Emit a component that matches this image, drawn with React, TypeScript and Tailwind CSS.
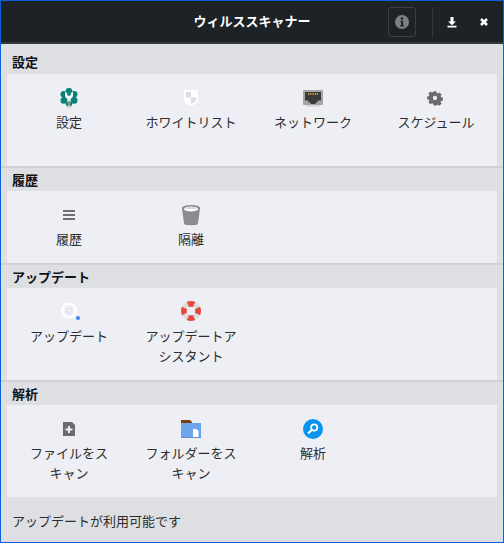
import React from "react";

const Wrench = () => (
  <svg width="24" height="24" viewBox="0 0 24 24">
    <g fill="#0b8277">
      <circle cx="12" cy="12.500" r="6.500" />
      <circle cx="12" cy="6.300" r="3.300" />
      <circle cx="17.200" cy="9.300" r="3.300" />
      <circle cx="17.200" cy="15.500" r="3.300" />
      <circle cx="12" cy="18.500" r="3.300" />
      <circle cx="6.800" cy="15.500" r="3.300" />
      <circle cx="6.800" cy="9.300" r="3.300" />
    </g>
    <path fill="#f4f5f8" d="M8 6.800v3.400c0 1.700 1 3 2.400 3.500v3.800h3.200v-3.800c1.400-.5 2.400-1.800 2.400-3.500V6.800l-2.200 1.300v1.900L12 11l-1.800-1V8.100z" />
    <rect x="10.800" y="16" width="2.400" height="4.500" fill="#8e8e8e" />
    <ellipse cx="12" cy="21.700" rx="3.200" ry="1.300" fill="#d6d6d8" />
  </svg>
);

const Shield = () => (
  <svg width="24" height="24" viewBox="0 0 24 24">
    <path fill="#ffffff" d="M5 5h14v9.500c0 3-3.500 5.100-7 6.500-3.500-1.400-7-3.500-7-6.500z" />
    <rect x="7" y="7" width="5" height="5.500" fill="#dcdde2" />
    <path fill="#dcdde2" d="M12 12.500h5v2c0 1.900-2.500 3.300-5 4.400z" />
  </svg>
);

const Network = () => (
  <svg width="24" height="24" viewBox="0 0 24 24">
    <rect x="2" y="5" width="20" height="15" rx="1" fill="#a5a5a8" />
    <path fill="#d9d9dc" d="M4 20h16l-2.500 2h-11z" />
    <path fill="#3a3a3c" d="M4 7h16v8.500h-3.500v2h-2v1.500h-5v-1.500h-2v-2H4z" />
    <path stroke="#eebb44" strokeWidth="1.500" strokeDasharray="1 .8" d="M7 9h10" fill="none" />
  </svg>
);

const Gear = () => (
  <svg width="24" height="24" viewBox="0 0 24 24">
    <g transform="translate(11 13) scale(.72) translate(-12 -12)">
      <path fill="#6b6b6d" fillRule="evenodd" d="M10 3h4l.5 2.500 1.700.7 2.100-1.400 2.900 2.900-1.400 2.100.7 1.700 2.500.5v4l-2.500.5-.7 1.700 1.400 2.100-2.900 2.900-2.100-1.400-1.700.7L14 23h-4l-.5-2.500-1.700-.7-2.100 1.400-2.900-2.900 1.400-2.100-.7-1.700L1 14.500v-4l2.500-.5.7-1.700-1.400-2.100 2.900-2.900 2.100 1.400 1.700-.7zM12 9.500a3 3 0 1 0 0 6 3 3 0 0 0 0-6z" transform="translate(0 -.5)" />
    </g>
  </svg>
);

const Lines = () => (
  <svg width="24" height="24" viewBox="0 0 24 24">
    <path fill="#6f6f71" d="M6 8h12v2H6zM6 12h12v2H6zM6 16h12v2H6z" />
  </svg>
);

const Bin = () => (
  <svg width="24" height="24" viewBox="0 0 24 24">
    <path fill="#8c8c8e" d="M3 6c0-4 18-4 18 0 0 1-1.800 14.500-2.200 16-.5 1.600-13.100 1.600-13.600 0C4.800 20.500 3 7 3 6z" />
    <ellipse cx="12" cy="7" rx="7" ry="2.600" fill="#ffffff" />
    <path fill="#d8d8da" d="M5.500 6.500c2-1 3-1.400 6.500-1.400s4.500.4 6.500 1.400l-2 .6h-9z" />
  </svg>
);

const UpdateIcon = () => (
  <svg width="24" height="24" viewBox="0 0 24 24">
    <circle cx="12" cy="11.500" r="6.800" fill="none" stroke="#ffffff" strokeWidth="2.400" />
    <path fill="none" stroke="#e2e3e9" strokeWidth="1.400" d="M9 11c.8-2 3.800-2.800 5.500-.8M15 12c-.8 2-3.800 2.800-5.500.8" />
    <path fill="#e2e3e9" d="M15.300 8v3h-3zM8.700 15v-3h3z" />
    <circle cx="21" cy="19" r="2" fill="#4285f4" />
  </svg>
);

const Lifebuoy = () => (
  <svg width="24" height="24" viewBox="0 0 24 24">
    <circle cx="12" cy="12" r="7.200" fill="none" stroke="#dcdcde" strokeWidth="5.600" />
    <g fill="none" stroke="#e8483c" strokeWidth="5.600">
      <path d="M9 5.500a7.200 7.200 0 0 1 6 0" />
      <path d="M18.500 9a7.200 7.200 0 0 1 0 6" />
      <path d="M15 18.500a7.200 7.200 0 0 1-6 0" />
      <path d="M5.500 15a7.200 7.200 0 0 1 0-6" />
    </g>
  </svg>
);

const FilePlus = () => (
  <svg width="24" height="24" viewBox="0 0 24 24">
    <path fill="#6b6b6d" d="M6 6h9l3 3v11H6z" />
    <path fill="#eeeff4" d="M11 10h2v2.500h2.500v2H13V17h-2v-2.500H8.500v-2H11z" />
  </svg>
);

const Folder = () => (
  <svg width="24" height="24" viewBox="0 0 24 24">
    <path fill="#7b3f10" d="M2 4h9l2 2v2H2z" />
    <rect x="2" y="7" width="20" height="15" fill="#6ca5ea" />
    <rect x="2" y="21" width="20" height="1" fill="#5a8fd0" />
    <path fill="#ffffff" d="M14 13h3.500l2 2v6H14z" />
  </svg>
);

const Search = () => (
  <svg width="24" height="24" viewBox="0 0 24 24">
    <circle cx="12" cy="13" r="10" fill="#0a94f2" />
    <circle cx="13.200" cy="11.500" r="3.100" fill="none" stroke="#ffffff" strokeWidth="1.800" />
    <path stroke="#ffffff" strokeWidth="2.200" d="M11 13.800l-4 3.700" fill="none" />
  </svg>
);

function Tile({ icon, label }: { icon: React.ReactNode; label: string }) {
  return (
    <div className="flex flex-col items-center">
      <div className="h-6 w-6">{icon}</div>
      <div className="mt-[3px] w-[98px] text-center text-[13px] leading-5 text-[#2b2d30] [line-break:strict]">{label}</div>
    </div>
  );
}

function Section({
  title,
  headerClass,
  panelClass,
  children,
}: {
  title: string;
  headerClass: string;
  panelClass: string;
  children: React.ReactNode;
}) {
  return (
    <section>
      <div className={`flex items-end px-[11px] text-[13px] font-bold leading-5 text-[#101214] ${headerClass}`}>
        {title}
      </div>
      <div className={`mx-[6px] grid grid-cols-[124px_120px_124px_122px] bg-[#eeeff4] pt-[11px] ${panelClass}`}>{children}</div>
    </section>
  );
}

export default function App() {
  return (
    <div
      lang="ja"
      className="flex h-[543px] w-[504px] flex-col border border-[#0d5fd6] bg-[#dedfe3]"
      style={{ fontFamily: '"Noto Sans CJK JP", "Liberation Sans", sans-serif' }}
    >
      <header className="relative flex h-[43px] shrink-0 items-center justify-end border-b-2 border-[#35383b] bg-[#1d2226] pr-[11px]">
        <div className="absolute inset-x-0 top-[10px] text-center text-[13px] font-bold leading-5 text-white">ウィルススキャナー</div>
        <button className="relative flex h-[30px] w-[28px] items-center justify-center rounded-[3px] border border-[#3a3f43]">
          <svg width="16" height="16" viewBox="0 0 16 16">
            <circle cx="8" cy="8" r="7" fill="#7d8082" />
            <circle cx="8" cy="4.600" r="1.300" fill="#1d2226" />
            <path fill="#1d2226" d="M6.500 6.800h2.600v4.400h1v1.200H6.200v-1.200h1V8H6.500z" />
          </svg>
        </button>
        <div className="relative ml-[16px] mr-[11px] h-[30px] w-px bg-[#33373a]" />
        <div className="relative flex w-[16px] items-center justify-center">
          <svg width="14" height="14" viewBox="0 0 14 14">
            <path fill="#ffffff" d="M5.500 2h3v4.500H11L7 10.200 3 6.500h2.500zM2.500 10.800h9V12.500h-9z" />
          </svg>
        </div>
        <div className="relative ml-[16px] flex w-[16px] items-center justify-center">
          <svg width="12" height="12" viewBox="0 0 12 12">
            <path stroke="#ffffff" strokeWidth="2.600" d="M3 3l6 6M9 3l-6 6" fill="none" />
          </svg>
        </div>
      </header>

      <Section title="設定" headerClass="h-[30px] pb-[2px]" panelClass="h-[92px]">
        <Tile icon={<Wrench />} label="設定" />
        <Tile icon={<Shield />} label="ホワイトリスト" />
        <Tile icon={<Network />} label="ネットワーク" />
        <Tile icon={<Gear />} label="スケジュール" />
      </Section>
      <div className="h-[2px] bg-[#d0d1d5]" />
      <Section title="履歴" headerClass="h-[23px] pb-[1px]" panelClass="h-[72px]">
        <Tile icon={<Lines />} label="履歴" />
        <Tile icon={<Bin />} label="隔離" />
      </Section>
      <div className="h-[2px] bg-[#d0d1d5]" />
      <Section title="アップデート" headerClass="h-[23px] pb-[1px]" panelClass="h-[92px]">
        <Tile icon={<UpdateIcon />} label="アップデート" />
        <Tile icon={<Lifebuoy />} label="アップデートアシスタント" />
      </Section>
      <div className="h-[2px] bg-[#d0d1d5]" />
      <Section title="解析" headerClass="h-[23px] pb-[1px]" panelClass="h-[92px]">
        <Tile icon={<FilePlus />} label="ファイルをスキャン" />
        <Tile icon={<Folder />} label="フォルダーをスキャン" />
        <Tile icon={<Search />} label="解析" />
      </Section>
      <div className="flex flex-1 items-center px-[11px] pt-[2px] text-[13px] leading-5 text-[#2b2d30]">アップデートが利用可能です</div>
    </div>
  );
}
